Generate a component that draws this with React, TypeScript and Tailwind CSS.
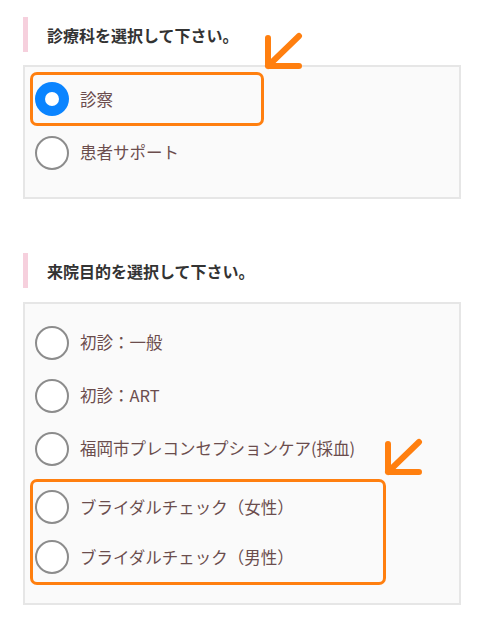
import React from 'react';

type Option = { label: string; checked?: boolean };

const Radio: React.FC<{ checked?: boolean }> = ({ checked }) =>
  checked ? (
    <span className="flex h-[34px] w-[34px] shrink-0 items-center justify-center rounded-full bg-[#0a84ff]">
      <span className="h-[14px] w-[14px] rounded-full bg-white" />
    </span>
  ) : (
    <span className="h-[34px] w-[34px] shrink-0 rounded-full border-2 border-[#8c8c8c] bg-white" />
  );

const Heading: React.FC<{ children: React.ReactNode }> = ({ children }) => (
  <div className="flex h-[35px] items-center border-l-[5px] border-[#f6d0dd] pl-[19px] text-[16px] font-bold text-[#333]">
    {children}
  </div>
);

const Row: React.FC<{ option: Option; tight?: boolean }> = ({ option, tight }) => (
  <label
    className={`flex items-center gap-[11px] text-[16.5px] text-[#6b4d4d] ${
      tight ? 'h-[50px] pl-[2px]' : 'h-[53px] pl-[10px]'
    }`}
  >
    <Radio checked={option.checked} />
    <span>{option.label}</span>
  </label>
);

// orange annotation frame drawn round a group of rows
const Highlight: React.FC<{ className: string; children: React.ReactNode }> = ({ className, children }) => (
  <div className={`ml-[5px] flex flex-col rounded-[7px] border-[3px] border-[#ff7f0f] ${className}`}>
    {children}
  </div>
);

const Arrow: React.FC<{ className: string }> = ({ className }) => (
  <svg className={`absolute ${className}`} width="44" height="40" viewBox="0 0 44 40" fill="none">
    <path
      d="M6 34 L37 4 M6 34 L6 6 M6 34 L37 34"
      stroke="#ff7f0f"
      strokeWidth="6"
      strokeLinecap="round"
      strokeLinejoin="round"
    />
  </svg>
);

const purposes: Option[] = [
  { label: '初診：一般' },
  { label: '初診：ART' },
  { label: '福岡市プレコンセプションケア(採血)' },
];

const bridal: Option[] = [
  { label: 'ブライダルチェック（女性）' },
  { label: 'ブライダルチェック（男性）' },
];

export default function App() {
  return (
    <div
      className="relative flex min-h-[627px] w-[484px] flex-col bg-white px-[23px] pt-[17px]"
      style={{ fontFamily: '"Noto Sans CJK JP", "Noto Sans", sans-serif' }}
    >
      {/* 診療科 */}
      <Heading>診療科を選択して下さい。</Heading>
      <div className="mt-[13px] flex flex-col border-2 border-[#e6e6e6] bg-[#fafafa] pb-[18px] pt-[5px]">
        <Highlight className="w-[234px]">
          <label className="flex h-[48px] items-center gap-[11px] pl-[2px] text-[16.5px] text-[#6b4d4d]">
            <Radio checked />
            <span>診察</span>
          </label>
        </Highlight>
        <Row option={{ label: '患者サポート' }} />
      </div>

      {/* 来院目的 */}
      <div className="mt-[54px]">
        <Heading>来院目的を選択して下さい。</Heading>
      </div>
      <div className="mt-[14px] flex flex-col border-2 border-[#e6e6e6] bg-[#fafafa] pb-[18px] pt-[12px]">
        {purposes.map(o => (
          <Row key={o.label} option={o} />
        ))}
        <Highlight className="mt-[4px] w-[356px]">
          {bridal.map(o => (
            <Row key={o.label} option={o} tight />
          ))}
        </Highlight>
      </div>

      <Arrow className="left-[262px] top-[32px]" />
      <Arrow className="left-[382px] top-[438px]" />
    </div>
  );
}
